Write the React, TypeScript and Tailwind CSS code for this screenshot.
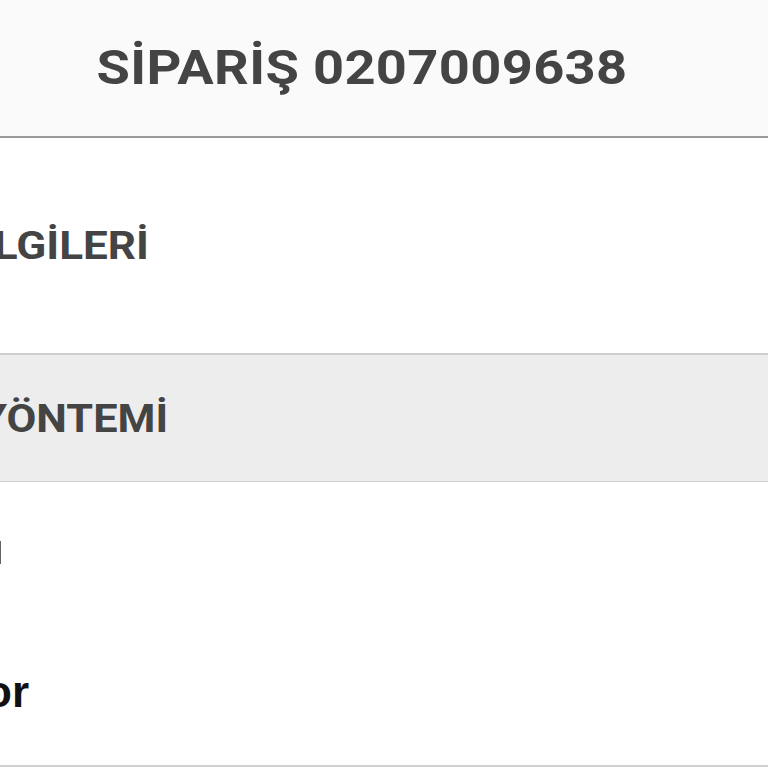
import React from "react";

const din = { fontFamily: "Roboto, 'Noto Sans', sans-serif" };
const arial = { fontFamily: "'Liberation Sans', Arial, sans-serif" };

function Clip({ end, children, className }: { end: number; children: React.ReactNode; className?: string }) {
  return (
    <div className={"flex justify-end overflow-hidden whitespace-nowrap " + (className ?? "")} style={{ width: end }}>
      <span className="shrink-0 origin-right">{children}</span>
    </div>
  );
}

export default function App() {
  return (
    <div className="w-[768px] h-[768px] overflow-hidden bg-white antialiased">
      <div className="h-[138px] bg-[#fafafa] border-b-2 border-[#9a9a9a] flex items-center justify-center pr-[44px]">
        <h1 className="text-[48px] font-bold text-[#444] scale-x-[1.13] tracking-[0.3px]" style={din}>
          SİPARİŞ 0207009638
        </h1>
      </div>
      <div className="h-[217px] bg-white border-b-2 border-[#cfcfcf] flex items-center">
        <Clip end={149} className="text-[38px] font-bold text-[#444]">
          <span className="inline-block origin-right scale-x-[1.16]" style={din}>SİPARİŞ BİLGİLERİ</span>
        </Clip>
      </div>
      <div className="h-[127px] bg-[#ededed] border-b border-[#cfcfcf] flex items-center">
        <Clip end={168} className="text-[38px] font-bold text-[#444]">
          <span className="inline-block origin-right scale-x-[1.14]" style={din}>ÖDEME YÖNTEMİ</span>
        </Clip>
      </div>
      <div className="h-[285px] bg-white border-b-2 border-[#d0d0d0] flex flex-col">
        <div className="mt-[44px] h-[44px] flex items-center">
          <Clip end={4} className="text-[42px] font-bold text-[#444]">
            <span className="inline-block origin-right scale-x-[1.01] will-change-transform" style={arial}>Kredi Kartı</span>
          </Clip>
        </div>
        <div className="mt-[96px] h-[50px] flex items-center">
          <Clip end={29} className="text-[44px] font-bold text-[#111]">
            <span style={arial}>Onaylanıyor</span>
          </Clip>
        </div>
      </div>
    </div>
  );
}
